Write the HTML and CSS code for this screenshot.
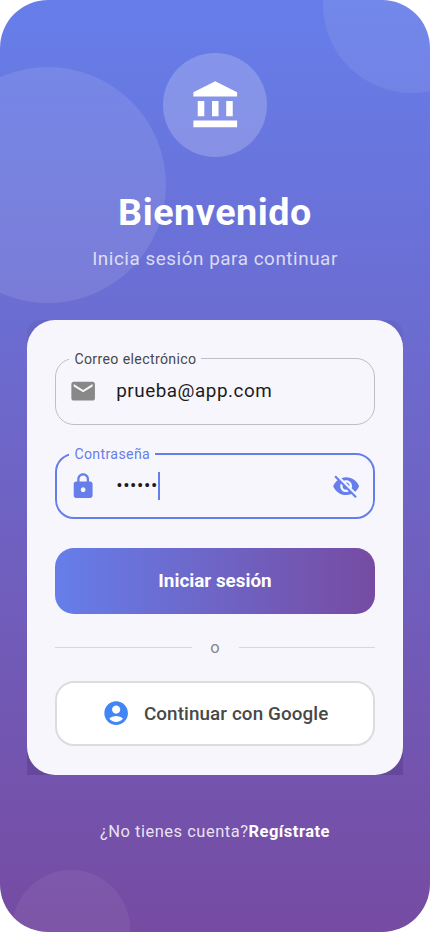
FILE: index.html
```html
<!DOCTYPE html>
<html lang="es">
<head>
<meta charset="utf-8">
<meta name="viewport" content="width=device-width, initial-scale=1">
<title>Iniciar sesión</title>
<link rel="stylesheet" href="styles.css">
</head>
<body>
<main class="screen">
  <span class="bubble bubble-left"></span>
  <span class="bubble bubble-top"></span>
  <span class="bubble bubble-bottom"></span>

  <header class="hero">
    <div class="logo">
      <svg viewBox="0 0 24 24"><path d="M4 10h3v7H4zM10.5 10h3v7h-3zM2 19h20v3H2zM17 10h3v7h-3zM12 1 2 6v2h20V6z"/></svg>
    </div>
    <h1 class="title">Bienvenido</h1>
    <p class="subtitle">Inicia sesión para continuar</p>
  </header>

  <div class="card-shade">
    <form class="card">
      <fieldset class="field">
        <legend class="label">Correo electrónico</legend>
        <div class="row">
          <svg class="icon" viewBox="0 0 24 24"><path d="M20 4H4c-1.100 0-1.990.9-1.990 2L2 18c0 1.100.9 2 2 2h16c1.100 0 2-.9 2-2V6c0-1.100-.9-2-2-2zm0 4-8 5-8-5V6l8 5 8-5v2z"/></svg>
          <span class="value">prueba@app.com</span>
        </div>
      </fieldset>
      <fieldset class="field focused">
        <legend class="label">Contraseña</legend>
        <div class="row">
          <svg class="icon" viewBox="0 0 24 24"><path d="M18 8h-1V6c0-2.760-2.240-5-5-5S7 3.240 7 6v2H6c-1.100 0-2 .9-2 2v10c0 1.100.9 2 2 2h12c1.100 0 2-.9 2-2V10c0-1.100-.9-2-2-2zm-6 9c-1.100 0-2-.9-2-2s.9-2 2-2 2 .9 2 2-.9 2-2 2zm3.100-9H8.900V6c0-1.710 1.390-3.100 3.100-3.100s3.100 1.390 3.100 3.100v2z"/></svg>
          <span class="value dots">••••••</span><span class="caret"></span>
          <svg class="icon eye" viewBox="0 0 24 24"><path d="M12 7c2.760 0 5 2.240 5 5 0 .65-.13 1.260-.36 1.830l2.920 2.920c1.510-1.260 2.700-2.890 3.430-4.750-1.730-4.390-6-7.500-11-7.500-1.400 0-2.740.25-3.980.7l2.160 2.160C10.740 7.130 11.350 7 12 7zM2 4.270l2.280 2.280.46.46C3.080 8.300 1.780 10.020 1 12c1.730 4.390 6 7.500 11 7.500 1.550 0 3.030-.3 4.380-.84l.42.42L19.730 22 21 20.730 3.270 3 2 4.270zM7.530 9.800l1.550 1.550c-.05.21-.08.43-.08.65 0 1.660 1.340 3 3 3 .22 0 .44-.03.65-.08l1.550 1.550c-.67.33-1.410.53-2.200.53-2.760 0-5-2.240-5-5 0-.79.2-1.530.53-2.200zm4.310-.78 3.150 3.150.02-.16c0-1.660-1.340-3-3-3l-.17.01z"/></svg>
        </div>
      </fieldset>
      <button type="button" class="btn primary">Iniciar sesión</button>
      <div class="divider"><span>o</span></div>
      <button type="button" class="btn google">
        <svg class="icon" viewBox="0 0 24 24"><path d="M12 2C6.480 2 2 6.480 2 12s4.480 10 10 10 10-4.480 10-10S17.520 2 12 2zm0 3.500c1.930 0 3.500 1.570 3.500 3.500S13.930 12.500 12 12.500 8.500 10.930 8.500 9 10.070 5.500 12 5.500zm0 14c-2.250 0-4.550-1-5.800-2.700C7.500 15.200 10 14.500 12 14.500s4.500.7 5.800 2.300C16.550 18.500 14.250 19.500 12 19.500z"/></svg>
        <span>Continuar con Google</span>
      </button>
    </form>
  </div>

  <p class="signup">¿No tienes cuenta?<b>Regístrate</b></p>
</main>
</body>
</html>
```

FILE: styles.css
```css
* { box-sizing: border-box; }
body { margin: 0; background: #fff; font-family: Roboto, sans-serif; }
svg { display: block; fill: currentColor; }

.screen {
  position: relative;
  width: 430px;
  height: 932px;
  overflow: hidden;
  border-radius: 48px;
  background: linear-gradient(#667eea, #764ba2);
  display: flex;
  flex-direction: column;
  align-items: center;
}
.bubble { position: absolute; border-radius: 50%; }
.bubble-left { width: 236px; height: 236px; left: -70.5px; top: 66.5px; background: rgba(255,255,255,.1); }
.bubble-top { width: 177px; height: 177px; left: 323.300px; top: -83.700px; background: rgba(255,255,255,.08); }
.bubble-bottom { width: 118px; height: 118px; left: 12px; top: 870.300px; background: rgba(255,255,255,.06); }

.hero { position: relative; height: 320.300px; padding-top: 53.300px; display: flex; flex-direction: column; align-items: center; }
.logo {
  width: 103.700px;
  height: 103.700px;
  border-radius: 50%;
  background: rgba(255,255,255,.2);
  color: #fff;
  display: flex;
  align-items: center;
  justify-content: center;
}
.logo svg { width: 52.500px; height: 52.500px; }
.title { margin: 32px 0 0; font-size: 37.700px; line-height: 46px; font-weight: 700; letter-spacing: .55px; color: #fff; }
.subtitle { margin: 12px 0 0; font-size: 18.850px; line-height: 24px; letter-spacing: .55px; color: rgba(255,255,255,.75); }

.card-shade {
  position: relative;
  width: 376.800px;
  height: 454.400px;
  border-radius: 14px 14px 0 0;
  background: linear-gradient(rgba(50,25,90,.08), rgba(50,25,90,.22));
}
.card {
  height: 100%;
  border-radius: 28px;
  padding: 30.500px 28.300px 0;
  background: #f7f6fc;
  display: flex;
  flex-direction: column;
}
.field {
  margin: 0;
  min-width: 0;
  height: 74px;
  padding: 0 13.500px;
  border: 1.200px solid #bfbec3;
  border-radius: 19px;
  color: #888;
}
.label { padding: 0 5px; font-size: 14.140px; line-height: 16px; letter-spacing: .36px; color: #49474e; }
.row { height: 49px; display: flex; align-items: center; }
.icon { width: 28.300px; height: 28.300px; flex: none; }
.value { margin-left: 18.500px; font-size: 18.850px; line-height: 24px; letter-spacing: .53px; color: #1d1b20; }
.dots { letter-spacing: .59px; }
.focused { margin-top: 21px; height: 73.300px; border: 2.400px solid #667eea; color: #667eea; padding: 0 12.500px; }
.focused .label { color: #667eea; }
.caret { width: 2px; height: 28px; background: #667eea; }
.eye { margin-left: auto; }

.btn {
  height: 66px;
  padding: 0;
  border: 0;
  border-radius: 19px;
  font-family: inherit;
  font-size: 18.850px;
  display: flex;
  align-items: center;
  justify-content: center;
}
.primary { margin-top: 28.500px; padding-top: 1px; color: #fff; font-weight: 700; background: linear-gradient(90deg, #667eea, #764ba2); }
.divider { height: 67px; display: flex; align-items: center; color: #888; font-size: 16.500px; }
.divider::before, .divider::after { content: ""; flex: 1; height: 1.200px; background: #d8d7dc; }
.divider span { width: 47px; text-align: center; }
.google { height: 65.500px; border: 2px solid #dcdcdd; background: #fff; color: #4285f4; font-weight: 500; gap: 14px; }
.google span { color: #484848; letter-spacing: .1px; padding-top: 1px; }

.signup { position: relative; margin: 46px 0 0; font-size: 16.500px; line-height: 22px; letter-spacing: .5px; color: rgba(255,255,255,.85); }
.signup b { color: #fff; }
```
